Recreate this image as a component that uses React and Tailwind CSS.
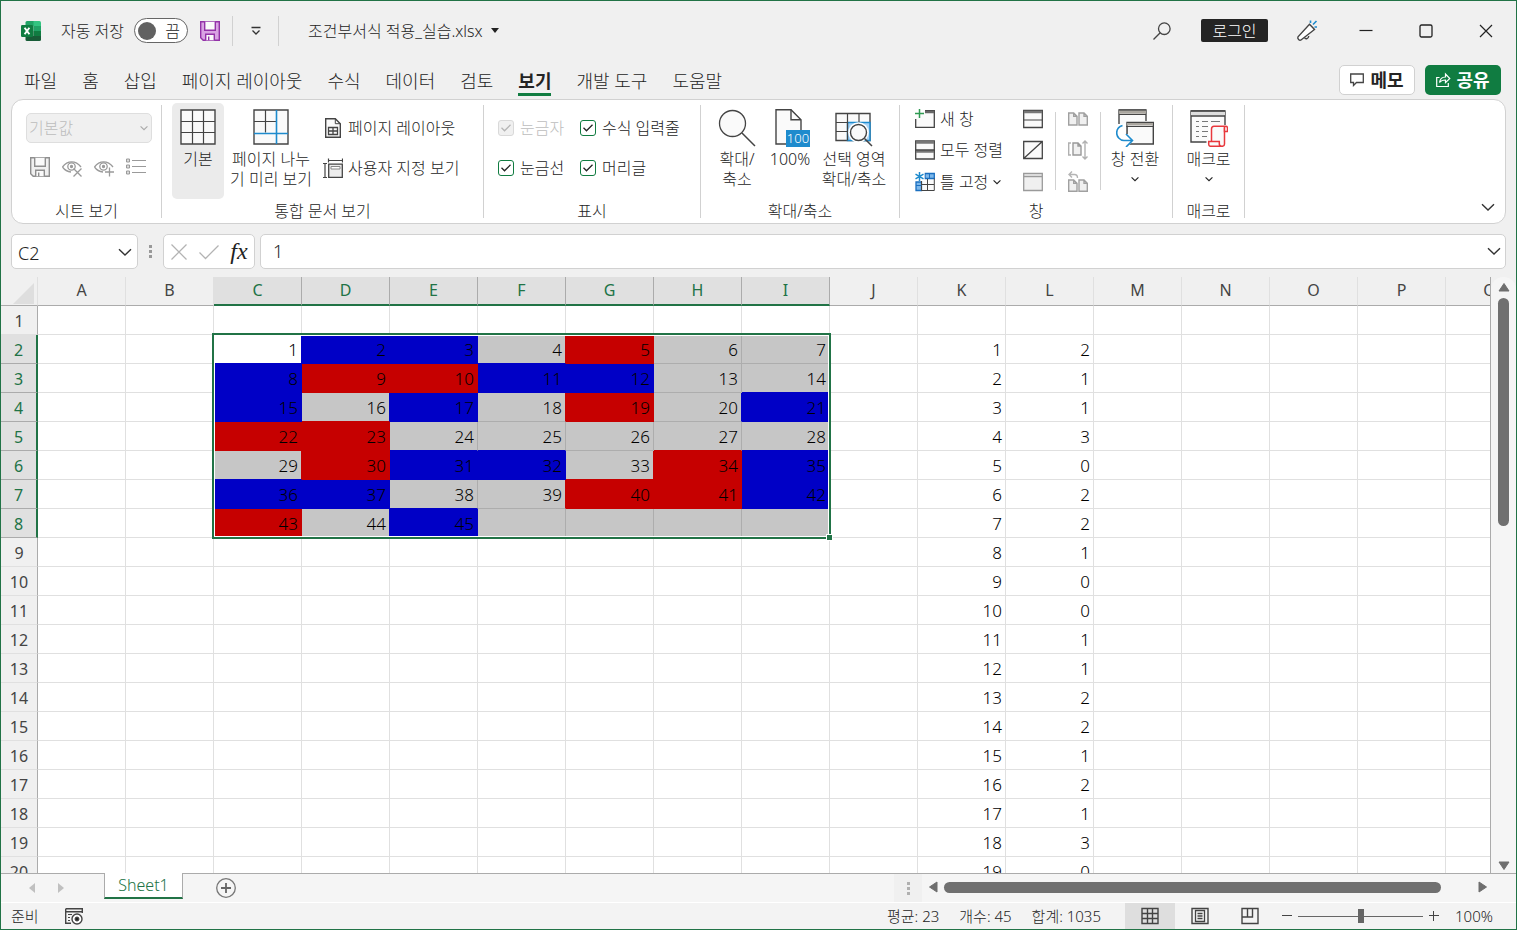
import React, { useState } from 'react';
import clsx from 'clsx';

const TABS = [
  '파일',
  '홈',
  '삽입',
  '페이지 레이아웃',
  '수식',
  '데이터',
  '검토',
  '보기',
  '개발 도구',
  '도움말',
];

const COLUMNS = 'ABCDEFGHIJKLMNOPQ'.split('');
const ROWS = Array.from({ length: 20 }, (_, i) => i + 1);

// Cells of C2:I8 hit by a formatting rule, b = blue, r = red
const FILLS = ['.bb.r..', 'brrbb..', 'b.b.r.b', 'rr.....', '.rbb.rb', 'bb..rrb', 'r.b....'];
const COUNTS = [2, 1, 1, 3, 0, 2, 2, 1, 0, 0, 1, 1, 2, 2, 1, 2, 1, 3, 0];

const isSelected = (row, col) => row >= 2 && row <= 8 && col >= 2 && col <= 8;

const fillOf = (row, col) => (isSelected(row, col) ? FILLS[row - 2][col - 2] : '.');

const valueOf = (row, col) => {
  if (isSelected(row, col)) {
    const value = (row - 2) * 7 + (col - 2) + 1;
    return value <= 45 ? value : '';
  }
  if (row >= 2 && col === 10) return row - 1;
  if (row >= 2 && col === 11) return COUNTS[row - 2];
  return '';
};

const BACKGROUND = { b: 'bg-[#0000c6]', r: 'bg-[#c60000]' };
const BORDER_RIGHT = { b: 'border-r-[#0000c6]', r: 'border-r-[#c60000]' };
const BORDER_BOTTOM = { b: 'border-b-[#0000c6]', r: 'border-b-[#c60000]' };

const cellClass = (row, col) => {
  const own = fillOf(row, col);
  const right = BORDER_RIGHT[own] || BORDER_RIGHT[fillOf(row, col + 1)];
  const bottom = BORDER_BOTTOM[own] || BORDER_BOTTOM[fillOf(row + 1, col)];
  const selected = isSelected(row, col);
  const active = row === 2 && col === 2;
  return clsx(
    'h-[29px] border-r border-b pt-[2px] pr-[3px] text-right',
    BACKGROUND[own] || (selected && !active ? 'bg-[#c6c6c6]' : 'bg-white'),
    right || (selected ? 'border-r-[#adadad]' : 'border-r-[#e0e0e0]'),
    bottom || (selected ? 'border-b-[#adadad]' : 'border-b-[#e0e0e0]')
  );
};

const Icon = ({ size = 20, className, children }) => (
  <svg
    width={size}
    height={size}
    viewBox={`0 0 ${size} ${size}`}
    fill="none"
    stroke="#444"
    className={clsx('shrink-0', className)}
    aria-hidden="true"
  >
    {children}
  </svg>
);

const Chevron = ({ size = 14, className = 'stroke-[#333]' }) => (
  <svg
    width={size}
    height={size}
    viewBox="0 0 14 14"
    fill="none"
    strokeWidth="1.4"
    className={clsx('shrink-0', className)}
    aria-hidden="true"
  >
    <path d="M1 4.2 7 10l6-5.8" />
  </svg>
);

const ExcelLogo = () => (
  <Icon size={20}>
    <g stroke="none">
      <path d="M6 0h7v5H4.5V1.5A1.5 1.5 0 0 1 6 0z" fill="#21a366" />
      <path d="M12.5 0h6A1.5 1.5 0 0 1 20 1.5V5h-7.5z" fill="#33c481" />
      <path d="M4.5 5h8v5h-8z" fill="#107c41" />
      <path d="M12.5 5H20v5h-7.5z" fill="#21a366" />
      <path d="M4.5 10h8v5h-8z" fill="#185c37" />
      <path d="M12.5 10H20v5h-7.5z" fill="#107c41" />
      <path d="M4.5 15H20v3.5a1.5 1.5 0 0 1-1.5 1.5H6a1.5 1.5 0 0 1-1.5-1.5z" fill="#185c37" />
      <rect y="4" width="12" height="12" rx="1.2" fill="#107c41" />
    </g>
    <path d="M3.6 6.7 8.4 13.3M8.4 6.7 3.6 13.3" stroke="#fff" strokeWidth="1.9" />
  </Icon>
);

const Floppy = ({ purple }) => (
  <Icon size={20} className={purple ? 'text-[#9332a8]' : 'text-[#8f8f8f]'}>
    <g stroke="currentColor" strokeWidth="1.4">
      <path d="M.7.7h18.6v18.6H3.2L.7 16.8z" fill={purple ? '#d9a3e3' : '#f0f0f0'} />
      <path d="M4.7.7v8.6h10.6V.7" fill="#fafafa" />
      <path d="M5.7 19.3v-6h8.6v6" fill="#fafafa" />
      <path d="M8.7 15.5v3.8" />
    </g>
  </Icon>
);

const Eye = ({ plus }) => (
  <Icon size={20}>
    <g stroke="#9a9a9a" strokeWidth="1.3">
      <path d="M.5 10C3 6.500 6.300 4.800 9.700 4.800s6.600 1.700 9.300 5.200M.5 10c2 2.800 5 4.700 8.500 5" />
      <circle cx="9.5" cy="9.5" r="3.7" />
      <circle cx="9.5" cy="9.5" r="1" fill="#9a9a9a" />
      {plus ? <path d="M15.500 10.500v9M11 15h9" /> : <path d="m11.500 11.500 8 8M19.500 11.500l-8 8" />}
    </g>
  </Icon>
);

const ListIcon = () => (
  <Icon size={20}>
    <g stroke="#9a9a9a">
      <path d="M6 3.5h14M6 9.5h14M6 15.5h14" strokeWidth="1.2" />
      <path d="M.5 2h3v3h-3zM.5 8h3v3h-3zM.5 14h3v3h-3z" fill="#ddd" />
    </g>
  </Icon>
);

const NormalViewIcon = () => (
  <Icon size={36}>
    <path d="M1 1h34v34H1z" fill="#fafafa" strokeWidth="1.4" />
    <path d="M12.5 1v34M23.5 1v34M1 12.5h34M1 23.5h34" strokeWidth="1.2" />
  </Icon>
);

const PageBreakIcon = () => (
  <Icon size={36}>
    <path d="M1 1h34v34H1z" fill="#fafafa" strokeWidth="1.4" />
    <path d="M12.5 1v22.5M1 12.5h22.5" strokeWidth="1.2" />
    <path d="M23.5 1v34M1 24.5h34" stroke="#1e8bcd" strokeWidth="1.6" />
  </Icon>
);

const PageLayoutIcon = () => (
  <Icon size={20}>
    <path d="M2.7.7h9.6l5 5v13.6H2.7z" fill="#fafafa" strokeWidth="1.4" />
    <path d="M12.3.7v5h5" />
    <path d="M5.5 9.5h9v7h-9zM10 9.5v7M5.5 13h9" strokeWidth="1.3" />
  </Icon>
);

const CustomViewIcon = () => (
  <Icon size={20}>
    <path d="M5.5 2.5h14M5.5.5v4M19.5.5v4M2 5.5v14M0 5.5h4M0 19.5h4" strokeWidth="1.2" />
    <path d="M5.7 6.2h13.6v13.1H5.7z" fill="#ededed" strokeWidth="1.3" />
    <path d="M8 8.5h9v2.500H8z" fill="#fff" stroke="#888" />
  </Icon>
);

const ZoomIcon = () => (
  <Icon size={38}>
    <circle cx="14.5" cy="14.5" r="13" fill="#fafafa" strokeWidth="1.3" />
    <path d="m24 24 13 13" strokeWidth="1.5" />
  </Icon>
);

const Zoom100Icon = () => (
  <div className="relative h-9 w-9">
    <Icon size={36}>
      <path d="M4 .7h15l10 10V35H4z" fill="#fafafa" strokeWidth="1.4" />
      <path d="M19 .7v10h10" strokeWidth="1.4" />
    </Icon>
    <span className="absolute top-[21px] left-[14px] w-6 bg-[#1e8bcd] text-center text-[13px] leading-[17px] text-white">
      100
    </span>
  </div>
);

const ZoomSelectionIcon = () => (
  <Icon size={38}>
    <path d="M1 4.5h34v27H1z" fill="#fafafa" strokeWidth="1.4" />
    <path d="M12.5 13.5H35v18H12.5z" fill="#a9d3f5" stroke="#1e8bcd" strokeWidth="1.5" />
    <path d="M12.5 4.5v27M24 4.5v9M1 13.5h11M1 22.5h11" strokeWidth="1.2" />
    <circle cx="23.5" cy="23.5" r="10.3" fill="#fff" stroke="none" />
    <circle cx="23.5" cy="23.5" r="8" fill="#fafafa" strokeWidth="1.4" />
    <path d="m29.5 29.5 7.500 7.500" strokeWidth="1.5" />
  </Icon>
);

const NewWindowIcon = () => (
  <Icon size={20} className="overflow-visible">
    <path d="M.7 10v8.3h18.6V1.700H10" fill="#fafafa" strokeWidth="1.3" />
    <path d="M10 3h9" strokeWidth="2.4" stroke="#666" />
    <path d="M4.500 0v9M0 4.500h9" stroke="#2f9a52" strokeWidth="1.5" />
  </Icon>
);

const ArrangeIcon = () => (
  <Icon size={20}>
    <path d="M.7 1h18.6v18H.7z" fill="#fafafa" strokeWidth="1.3" />
    <path d="M1 2.5h18M1 11.5h18" strokeWidth="2.6" stroke="#777" />
    <path d="M.7 10h18.6" strokeWidth="1.3" />
  </Icon>
);

const FreezeIcon = () => (
  <Icon size={20}>
    <path d="M1 1h18v17.5H1z" fill="#fafafa" stroke="none" />
    <path d="M10 1.500h9.3v5H10zM1 10h5.5v8.500H1z" fill="#7db7ea" stroke="#1a6fc0" strokeWidth="1.3" />
    <path d="M6.5 7v11.500h12.800V6.500M12.500 7v11.500M7 12.500h12" />
    <path d="M1 13.500h5.500M14.500 1v5.500" stroke="#1a6fc0" />
    <path d="M-.5-.5h10V9h-10z" fill="#fff" stroke="none" />
    <path d="M4.500 0v9M.5 2.200l8 4.600M8.500 2.200l-8 4.600" stroke="#1e8bcd" strokeWidth="1.5" />
  </Icon>
);

const SplitIcon = () => (
  <Icon size={20}>
    <path d="M.7 1.5h18.6v17H.7z" fill="#fafafa" strokeWidth="1.3" />
    <path d="M1 3h18" strokeWidth="2.4" stroke="#777" />
    <path d="M.7 11h18.6" />
  </Icon>
);

const HideIcon = () => (
  <Icon size={20}>
    <path d="M.7 1.5h18.6v17H.7zM.7 18.5 19.3 1.5" fill="#fafafa" strokeWidth="1.3" />
  </Icon>
);

const UnhideIcon = () => (
  <Icon size={20}>
    <path d="M.7 1.5h18.6v17H.7zM.7 4.5h18.6" fill="#f0f0f0" stroke="#9a9a9a" strokeWidth="1.3" />
  </Icon>
);

const SideBySideIcon = () => (
  <Icon size={20}>
    <g stroke="#a0a0a0" strokeWidth="1.4" fill="#f0f0f0">
      <path d="M.7 4h5l3.3 3.300V16H.7zM5.700 4v3.300H9M11 4h5l3.300 3.300V16H11zM16 4v3.300h3.300" />
    </g>
  </Icon>
);

const SyncScrollIcon = () => (
  <Icon size={20}>
    <g stroke="#b0b0b0" strokeWidth="1.4" fill="none">
      <path d="M3 3H.7v12H3" />
      <path d="M5 3h5l3 3v9H5zM10 3v3h3" fill="#f0f0f0" stroke="#999" />
      <path d="M17 1v18M14.500 3.500 17 1l2.500 2.500M14.500 16.500 17 19l2.500-2.500" />
    </g>
  </Icon>
);

const ResetPositionIcon = () => (
  <Icon size={20} className="overflow-visible">
    <g stroke="#a0a0a0" strokeWidth="1.4" fill="#f0f0f0">
      <path d="M.7 8h5L9 11.300v8H.7zM5.700 8v3.300H9M11 8h5l3.300 3.300v8H11zM16 8v3.300h3.300" />
      <path d="M4-.5 1 2.500l3 3M1 2.500h5.500c2 0 3 1.500 3 3.500" fill="none" stroke="#b5b5b5" />
    </g>
  </Icon>
);

const SwitchWindowIcon = () => (
  <Icon size={38}>
    <path d="M3 15V1h27v11" fill="#fafafa" strokeWidth="1.4" />
    <path d="M3 3h27" strokeWidth="3.5" stroke="#aaa69f" />
    <path d="M3 5.5h27M3 1h27" strokeWidth="1.2" />
    <path d="M11 13.5h26.300V35H11z" fill="#fafafa" strokeWidth="1.4" />
    <path d="M11 15h26" strokeWidth="3" stroke="#aaa69f" />
    <path d="M11 17.5h26M11 13.5h26" strokeWidth="1.2" />
    <path d="M5 18h6.500v7l6 6.500-4.500 4.500H3z" fill="#fff" stroke="none" />
    <path d="M6.500 16.500C3 17.500.7 20.500.7 24s3 7.500 7.300 7.500h8M10 25l6.500 6.500L10 38" stroke="#1e8bcd" strokeWidth="1.6" />
    <path d="M11 25v-8" strokeWidth="1.4" />
  </Icon>
);

const MacroIcon = () => (
  <Icon size={38}>
    <path d="M1 2h34v31H1z" fill="#fafafa" strokeWidth="1.4" />
    <path d="M1 4.500h34" strokeWidth="4" stroke="#ddd" />
    <path d="M1 2h34M1 7h34" strokeWidth="1.4" />
    <path d="M6 12.500h3M12 12.500h6M21 12.500h9M6 17.500h3M12 17.500h6M6 22.500h3M12 22.500h6M6 27.500h3M12 27.500h5" stroke="#777" />
    <path d="M20 17.500h15v20H18v-5h2z" fill="#fff" stroke="#fff" strokeWidth="3" />
    <g stroke="#e8383d" strokeWidth="1.5" fill="#fafafa">
      <path d="M21.500 32.500V20c0-2 .8-2.800 2.500-2.800h10.500V35c0 1.500-1 2.300-2.500 2.300H21.500z" />
      <path d="M34.500 22.500h3V19c0-1.300-.8-1.800-1.800-1.800s-1.200.8-1.200 1.800zM18.700 32.500h10.600v2c0 1.800.7 2.800 2 2.800H20.500c-1.200 0-1.800-.8-1.800-2z" />
    </g>
  </Icon>
);

const Megaphone = () => (
  <Icon size={22}>
    <path d="M13.5 4.200 18.500 9.500 5 20c-1.500.8-4-1.200-3-3.200z" fill="#fff" strokeWidth="1.4" />
    <path d="M8.500 17.500c.8 2 3.800 1.800 4.300-1.500" strokeWidth="1.4" />
    <path d="M14.500 3V.5M17 4.500l3.500-3.500M18.500 7h2.500" stroke="#1e8bcd" strokeWidth="1.6" />
  </Icon>
);

const Divider = ({ className = 'my-[5px]' }) => (
  <div className={clsx('w-px shrink-0 bg-[#d1d1d1]', className)} />
);

const Group = ({ label, className, children }) => (
  <section className={clsx('flex shrink-0 flex-col py-[3px]', className)}>
    <div className="flex h-24">{children}</div>
    <h2 className="mt-[3px] text-center leading-[18px]">{label}</h2>
  </section>
);

const BigButton = ({ icon, lines, className, dropdown }) => (
  <button
    type="button"
    className={clsx('flex shrink-0 flex-col items-center rounded-[5px] pt-[6px] leading-5', className)}
  >
    <span className="mb-1 flex h-9 items-start">{icon}</span>
    {lines.map((line) => (
      <span key={line} className="whitespace-nowrap">
        {line}
      </span>
    ))}
    {dropdown && <Chevron size={8} className="mt-[6px] stroke-[#222] stroke-2" />}
  </button>
);

const SmallButton = ({ icon, label, dropdown, className }) => (
  <button type="button" className={clsx('flex items-center gap-[5px] whitespace-nowrap', className)}>
    {icon}
    <span>{label}</span>
    {dropdown && <Chevron size={8} className="stroke-[#222] stroke-2" />}
  </button>
);

const IconButton = ({ label, className, disabled, children }) => (
  <button
    type="button"
    aria-label={label}
    disabled={disabled}
    className={clsx('flex shrink-0 items-center justify-center', className)}
  >
    {children}
  </button>
);

const CheckOption = ({ label, disabled }) => {
  const [checked, setChecked] = useState(true);
  return (
    <label
      className={clsx('flex h-10 items-center gap-[6px] whitespace-nowrap', disabled && 'text-[#bdbdbd]')}
    >
      <span className="grid">
        <input
          type="checkbox"
          checked={checked}
          disabled={disabled}
          onChange={(e) => setChecked(e.target.checked)}
          className="col-start-1 row-start-1 h-4 w-4 appearance-none rounded-[3px] border border-[#107c41] bg-white disabled:border-[#d9d9d9] disabled:bg-[#f0f0f0]"
        />
        {checked && (
          <svg
            viewBox="0 0 16 16"
            fill="none"
            strokeWidth="1.3"
            className={clsx(
              'pointer-events-none col-start-1 row-start-1 h-4 w-4',
              disabled ? 'stroke-[#b5b5b5]' : 'stroke-[#222]'
            )}
          >
            <path d="m3.5 7.800 3 3 6-6" />
          </svg>
        )}
      </span>
      {label}
    </label>
  );
};

const TitleBar = () => (
  <header className="flex h-[59px] shrink-0 items-center pl-5">
    <ExcelLogo />
    <span className="ml-5 whitespace-nowrap">자동 저장</span>
    <button
      type="button"
      role="switch"
      aria-checked="false"
      aria-label="자동 저장"
      className="ml-[10px] flex h-[25px] w-[54px] items-center justify-between rounded-full border border-[#666] bg-white pr-[7px] pl-[3px]"
    >
      <span className="h-[18px] w-[18px] rounded-full bg-[#616161]" />
      <span className="leading-5">끔</span>
    </button>
    <IconButton label="저장" className="ml-3">
      <Floppy purple />
    </IconButton>
    <Divider className="ml-3 h-[30px]" />
    <IconButton label="빠른 실행 도구 모음" className="w-[45px]">
      <svg width="10" height="10" viewBox="0 0 10 10" fill="none" stroke="#333" strokeWidth="1.3">
        <path d="M.5 1.5h9M1.5 4.500 5 8l3.500-3.500" />
      </svg>
    </IconButton>
    <Divider className="h-[30px]" />
    <button type="button" className="ml-[29px] flex items-center gap-2 whitespace-nowrap">
      <span>조건부서식 적용_실습.xlsx</span>
      <svg width="8" height="5" viewBox="0 0 8 5" fill="#222">
        <path d="M0 0h8L4 5z" />
      </svg>
    </button>
    <div className="ml-auto flex items-center">
      <IconButton label="검색" className="mr-[30px]">
        <Icon size={18}>
          <circle cx="11.3" cy="6.7" r="5.8" strokeWidth="1.3" />
          <path d="M7.200 10.800.5 17.500" strokeWidth="1.3" />
        </Icon>
      </IconButton>
      <button type="button" className="h-[23px] w-[67px] rounded-[2px] bg-[#242424] leading-5 text-white">
        로그인
      </button>
      <IconButton label="새로운 기능" className="mr-[18px] ml-7">
        <Megaphone />
      </IconButton>
      <IconButton label="최소화" className="w-[60px]">
        <Icon size={14}>
          <path d="M.5 6.5h13" stroke="#222" strokeWidth="1.2" />
        </Icon>
      </IconButton>
      <IconButton label="최대화" className="w-[60px]">
        <Icon size={14}>
          <rect x="1" y="1" width="12" height="12" rx="1.5" stroke="#222" strokeWidth="1.3" />
        </Icon>
      </IconButton>
      <IconButton label="닫기" className="w-[60px]">
        <Icon size={14}>
          <path d="m1 1 12 12M13 1 1 13" stroke="#222" strokeWidth="1.2" />
        </Icon>
      </IconButton>
    </div>
  </header>
);

const TabBar = () => (
  <nav className="flex h-[39px] shrink-0 items-start pr-[15px] pl-[23px]">
    <div className="flex gap-[25px] pt-[6px] text-lg">
      {TABS.map((tab) => (
        <a
          key={tab}
          href="#"
          className={clsx(
            'h-[30px] border-b-[3px] leading-[30px] whitespace-nowrap',
            tab === '보기' ? 'border-[#107c41] font-bold' : 'border-transparent'
          )}
        >
          {tab}
        </a>
      ))}
    </div>
    <div className="ml-auto flex gap-[10px] pt-[5px] text-lg font-bold">
      <button
        type="button"
        className="flex h-[30px] w-[76px] items-center justify-center gap-[6px] rounded-[5px] border border-[#d1d1d1] bg-white leading-6"
      >
        <Icon size={14}>
          <path d="M.7 1h12.6v8.500H6.500L3.500 12.500v-3H.7z" strokeWidth="1.3" />
        </Icon>
        메모
      </button>
      <button
        type="button"
        className="flex h-[30px] w-[76px] items-center justify-center gap-[6px] rounded-[5px] bg-[#107c41] leading-6 text-white"
      >
        <Icon size={14} className="overflow-visible">
          <g stroke="#fff" strokeWidth="1.2">
            <path d="M3.500 4.500H.7v9h11.600v-3.500" />
            <path d="M3.500 9.500c.5-3.500 2.500-5.500 6-5.500V1l4.300 4.500-4.300 4.200V7c-2.500 0-4.500.5-6 2.500z" />
          </g>
        </Icon>
        공유
      </button>
    </div>
  </nav>
);

const Ribbon = () => (
  <div className="mx-[10px] flex shrink-0 overflow-hidden rounded-xl border border-[#d1d1d1] bg-white">
    <Group label="시트 보기" className="w-[149px]">
      <div className="flex w-full flex-col pt-[10px]">
        <div className="relative mr-[9px] ml-[14px]">
          <select
            disabled
            aria-label="시트 보기"
            className="h-[30px] w-full appearance-none rounded-[5px] border border-[#dedede] bg-[#f0f0f0] pl-[2px] text-[#bdbdbd] opacity-100"
          >
            <option>기본값</option>
          </select>
          <Chevron size={8} className="pointer-events-none absolute top-[11px] right-1 stroke-[#aaa] stroke-2" />
        </div>
        <div className="mt-3 flex pl-3">
          <IconButton label="유지" disabled className="h-6 w-8">
            <Floppy />
          </IconButton>
          <IconButton label="끝내기" disabled className="h-6 w-8">
            <Eye />
          </IconButton>
          <IconButton label="새로 만들기" disabled className="h-6 w-8">
            <Eye plus />
          </IconButton>
          <IconButton label="옵션" disabled className="h-6 w-8">
            <ListIcon />
          </IconButton>
        </div>
      </div>
    </Group>
    <Divider />
    <Group label="통합 문서 보기" className="w-[321px]">
      <BigButton icon={<NormalViewIcon />} lines={['기본']} className="ml-[10px] w-[52px] bg-[#ebebeb]" />
      <BigButton icon={<PageBreakIcon />} lines={['페이지 나누', '기 미리 보기']} className="w-[94px]" />
      <div className="flex flex-col items-start pt-[5px] pl-[5px]">
        <SmallButton icon={<PageLayoutIcon />} label="페이지 레이아웃" className="h-10" />
        <SmallButton icon={<CustomViewIcon />} label="사용자 지정 보기" className="h-10" />
      </div>
    </Group>
    <Divider />
    <Group label="표시" className="w-[216px]">
      <div className="grid grid-cols-[82px_110px] content-start pt-[5px] pl-[14px]">
        <CheckOption label="눈금자" disabled />
        <CheckOption label="수식 입력줄" />
        <CheckOption label="눈금선" />
        <CheckOption label="머리글" />
      </div>
    </Group>
    <Divider />
    <Group label="확대/축소" className="w-[198px]">
      <BigButton icon={<ZoomIcon />} lines={['확대/', '축소']} className="ml-[10px] w-[52px]" />
      <BigButton icon={<Zoom100Icon />} lines={['100%']} className="w-[54px]" />
      <BigButton icon={<ZoomSelectionIcon />} lines={['선택 영역', '확대/축소']} className="w-[74px]" />
    </Group>
    <Divider />
    <Group label="창" className="w-[272px]">
      <div className="flex w-[117px] flex-col items-start pl-[15px]">
        <SmallButton icon={<NewWindowIcon />} label="새 창" className="h-[31px]" />
        <SmallButton icon={<ArrangeIcon />} label="모두 정렬" className="h-8" />
        <SmallButton icon={<FreezeIcon />} label="틀 고정" dropdown className="h-8" />
      </div>
      <div className="mr-[6px] flex flex-col">
        <IconButton label="나누기" className="h-[31px] w-8">
          <SplitIcon />
        </IconButton>
        <IconButton label="숨기기" className="h-8 w-8">
          <HideIcon />
        </IconButton>
        <IconButton label="숨기기 취소" disabled className="h-8 w-8">
          <UnhideIcon />
        </IconButton>
      </div>
      <Divider className="my-[9px]" />
      <div className="flex flex-col">
        <IconButton label="나란히 보기" disabled className="h-[31px] w-11">
          <SideBySideIcon />
        </IconButton>
        <IconButton label="동시 스크롤" disabled className="h-8 w-11">
          <SyncScrollIcon />
        </IconButton>
        <IconButton label="창 위치 다시 정렬" disabled className="h-8 w-11">
          <ResetPositionIcon />
        </IconButton>
      </div>
      <Divider className="my-[9px]" />
      <BigButton icon={<SwitchWindowIcon />} lines={['창 전환']} dropdown className="w-[68px]" />
    </Group>
    <Divider />
    <Group label="매크로" className="w-[71px]">
      <BigButton icon={<MacroIcon />} lines={['매크로']} dropdown className="w-full" />
    </Group>
    <Divider />
    <IconButton label="리본 축소" className="mr-[10px] mb-[9px] ml-auto self-end">
      <Chevron />
    </IconButton>
  </div>
);

const FormulaBar = () => (
  <div className="mx-[10px] mt-[10px] mb-2 flex h-[35px] shrink-0 text-lg">
    <div className="flex w-[127px] items-center rounded-[5px] border border-[#d1d1d1] bg-white pr-[5px] pl-[6px]">
      <input aria-label="이름 상자" defaultValue="C2" className="w-full min-w-0 pt-[2px] outline-none" />
      <Chevron />
    </div>
    <div className="flex w-[25px] flex-col items-center justify-center gap-[2px]">
      <span className="h-[3px] w-[3px] bg-[#999]" />
      <span className="h-[3px] w-[3px] bg-[#999]" />
      <span className="h-[3px] w-[3px] bg-[#999]" />
    </div>
    <div className="flex w-[92px] items-center rounded-[5px] border border-[#d1d1d1] bg-white">
      <IconButton label="취소" className="w-[30px]">
        <Icon size={16}>
          <path d="m.5.500 15 15M15.500.500l-15 15" stroke="#b3b3b3" strokeWidth="1.3" />
        </Icon>
      </IconButton>
      <IconButton label="입력" className="w-[30px]">
        <Icon size={20}>
          <path d="m.5 10.500 6 6 13-13" stroke="#b3b3b3" strokeWidth="1.3" />
        </Icon>
      </IconButton>
      <button
        type="button"
        className="w-[30px] pb-[2px] font-['Liberation_Serif',serif] text-[24px] leading-6 font-medium text-[#222] italic"
      >
        fx
      </button>
    </div>
    <div className="ml-[5px] flex min-w-0 flex-1 items-center rounded-[5px] border border-[#d1d1d1] bg-white pr-1 pb-[2px] pl-3">
      <input aria-label="수식 입력줄" defaultValue="1" className="w-full min-w-0 outline-none" />
      <Chevron />
    </div>
  </div>
);

const Sheet = () => (
  <div className="relative min-w-0 flex-1 overflow-hidden border-r border-[#ababab]">
    <table className="w-[1533px] table-fixed border-separate border-spacing-0 text-[17px] leading-[26px] text-black">
      <thead>
        <tr className="text-[16px] text-[#444]">
          <th className="h-[29px] w-[37px] border-r border-b border-r-[#e0e0e0] border-b-[#ababab] bg-[#f0f0f0] p-0">
            <svg width="21" height="21" viewBox="0 0 21 21" fill="#dedede" className="mt-1 ml-3">
              <path d="M21 0v21H0z" />
            </svg>
          </th>
          {COLUMNS.map((name, col) => (
            <th
              key={name}
              scope="col"
              className={clsx(
                'h-[29px] w-[88px] border-r px-0 pt-0 font-normal',
                col >= 2 && col <= 8
                  ? 'border-b-2 border-r-[#ababab] border-b-[#217346] bg-[#e0e0e0] pb-px text-[#217346]'
                  : 'border-b border-r-[#e0e0e0] border-b-[#ababab] bg-[#f0f0f0] pb-[2px]',
                col === 1 && 'border-r-[#ababab]'
              )}
            >
              {name}
            </th>
          ))}
        </tr>
      </thead>
      <tbody>
        {ROWS.map((row) => (
          <tr key={row}>
            <th
              scope="row"
              className={clsx(
                'h-[29px] border-b px-0 pt-[2px] pb-0 text-[16px] font-normal',
                row >= 2 && row <= 8
                  ? 'border-r-2 border-r-[#217346] border-b-[#ababab] bg-[#e0e0e0] text-[#217346]'
                  : 'border-r border-r-[#ababab] border-b-[#e0e0e0] bg-[#f0f0f0] text-[#444]',
                row === 1 && 'border-b-[#ababab]'
              )}
            >
              {row}
            </th>
            {COLUMNS.map((name, col) => (
              <td key={name} className={cellClass(row, col)}>
                {valueOf(row, col)}
              </td>
            ))}
          </tr>
        ))}
      </tbody>
    </table>

    {/* Selection frame and fill handle over C2:I8 */}
    <div className="pointer-events-none absolute top-[56px] left-[211px] h-[206px] w-[619px] border-2 border-[#217346]">
      <div className="h-full border border-white" />
      <span className="absolute -right-[4px] -bottom-[4px] h-[7px] w-[7px] border border-white bg-[#217346]" />
    </div>
  </div>
);

const Triangle = ({ className }) => (
  <svg width="12" height="10" viewBox="0 0 12 10" fill="#6e6e6e" className={className} aria-hidden="true">
    <path d="M6 1.500 11 9H1z" stroke="#6e6e6e" strokeLinejoin="round" />
  </svg>
);

const VerticalScroll = () => (
  <div className="flex w-[25px] shrink-0 flex-col items-center rounded-t-xl bg-[#f5f5f5] pt-[5px] pb-[2px]">
    <IconButton label="위로 스크롤">
      <Triangle />
    </IconButton>
    <div className="my-[6px] w-[11px] flex-1">
      <div className="h-[41%] rounded-full bg-[#707070]" />
    </div>
    <IconButton label="아래로 스크롤">
      <Triangle className="rotate-180" />
    </IconButton>
  </div>
);

const SheetTabs = () => (
  <div className="flex h-[29px] shrink-0 border-t border-[#ababab] bg-[#f5f5f5]">
    <div className="flex w-[103px] items-center gap-[19px] pl-[26px]">
      <IconButton label="이전 시트">
        <svg width="10" height="10" viewBox="0 0 10 10" fill="#c0c0c0">
          <path d="M8 0v10L2 5z" />
        </svg>
      </IconButton>
      <IconButton label="다음 시트">
        <svg width="10" height="10" viewBox="0 0 10 10" fill="#c0c0c0">
          <path d="M2 0v10l6-5z" />
        </svg>
      </IconButton>
    </div>
    <button
      type="button"
      className="-mt-px h-[26px] w-[79px] border-x border-b-2 border-x-[#ababab] border-b-[#217346] bg-white text-[16px] leading-6 text-[#217346]"
    >
      Sheet1
    </button>
    <IconButton label="새 시트" className="ml-[33px]">
      <Icon size={20}>
        <circle cx="10" cy="10" r="9.3" stroke="#777" strokeWidth="1.3" />
        <path d="M10 5v10M5 10h10" stroke="#666" strokeWidth="1.8" />
      </Icon>
    </IconButton>
    <div className="ml-auto flex w-[622px] items-center pb-[2px]">
      <div className="-mb-[2px] flex h-[28px] w-[28px] flex-col items-center justify-center gap-[2px] bg-[#f0f0f0]">
        <span className="h-[3px] w-[3px] bg-[#b0b0b0]" />
        <span className="h-[3px] w-[3px] bg-[#b0b0b0]" />
        <span className="h-[3px] w-[3px] bg-[#b0b0b0]" />
      </div>
      <IconButton label="왼쪽으로 스크롤" className="ml-[5px]">
        <Triangle className="-rotate-90" />
      </IconButton>
      <div className="mr-1 ml-[5px] flex-1">
        <div className="h-[11px] w-[94%] rounded-full bg-[#707070]" />
      </div>
      <IconButton label="오른쪽으로 스크롤" className="mr-[27px]">
        <Triangle className="rotate-90" />
      </IconButton>
    </div>
  </div>
);

const StatusBar = () => (
  <footer className="flex h-[27px] shrink-0 items-center border-t border-white bg-[#f3f3f3] pl-[10px] text-[15px] leading-5 whitespace-nowrap">
    <span>준비</span>
    <IconButton label="매크로 기록" className="ml-[26px]">
      <Icon size={18}>
        <path d="M.7 1.700h16.600V6M.7 1.700v14.600H6M1 4.700h16" strokeWidth="1.4" />
        <path d="M3 7.500h4M3 10.500h2M3 13.500h2" />
        <circle cx="12" cy="12" r="5" fill="#fff" strokeWidth="1.4" />
        <circle cx="12" cy="12" r="2" fill="#222" />
      </Icon>
    </IconButton>
    <div className="ml-auto flex gap-5 pr-6">
      <span>평균: 23</span>
      <span>개수: 45</span>
      <span>합계: 1035</span>
    </div>
    <IconButton label="기본" className="h-full w-[50px] bg-[#dedede]">
      <Icon size={18}>
        <path d="M1 1.500h16v15H1zM6.500 1.500v15M11.500 1.500v15M1 6.500h16M1 11.500h16" strokeWidth="1.4" />
      </Icon>
    </IconButton>
    <IconButton label="페이지 레이아웃" className="h-full w-[50px]">
      <Icon size={18}>
        <path d="M1 1.500h16v15H1z" strokeWidth="1.4" />
        <path d="M4.500 3.500h9v11h-9zM6.500 6.500h5M6.500 9h5M6.500 11.500h5" strokeWidth="1.3" />
      </Icon>
    </IconButton>
    <IconButton label="페이지 나누기 미리 보기" className="h-full w-[50px]">
      <Icon size={18}>
        <path d="M1 1.500h16v15H1zM1 10h10.500V1.500M6.500 1.500V10" strokeWidth="1.4" />
      </Icon>
    </IconButton>
    <IconButton label="축소" className="ml-[6px]">
      <Icon size={12}>
        <path d="M1 5.5h10" />
      </Icon>
    </IconButton>
    <input
      type="range"
      aria-label="확대/축소"
      defaultValue="50"
      className="mx-[5px] h-4 w-[125px] appearance-none bg-[linear-gradient(#666,#666)] bg-[length:100%_1px] bg-center bg-no-repeat [&::-webkit-slider-thumb]:h-[14px] [&::-webkit-slider-thumb]:w-[6px] [&::-webkit-slider-thumb]:appearance-none [&::-webkit-slider-thumb]:bg-[#666]"
    />
    <IconButton label="확대">
      <Icon size={12}>
        <path d="M1 5.5h10M5.5 1v10" />
      </Icon>
    </IconButton>
    <button type="button" className="mr-2 w-[68px] text-center">
      100%
    </button>
  </footer>
);

const App = () => (
  <div className="flex h-screen min-w-0 flex-col overflow-hidden border border-[#217346] bg-[#f0f0f0] font-['Noto_Sans','Noto_Sans_CJK_KR',sans-serif] text-base font-light text-[#242424]">
    <TitleBar />
    <TabBar />
    <Ribbon />
    <FormulaBar />
    <main className="flex min-h-0 flex-1">
      <Sheet />
      <VerticalScroll />
    </main>
    <SheetTabs />
    <StatusBar />
  </div>
);

export default App;
